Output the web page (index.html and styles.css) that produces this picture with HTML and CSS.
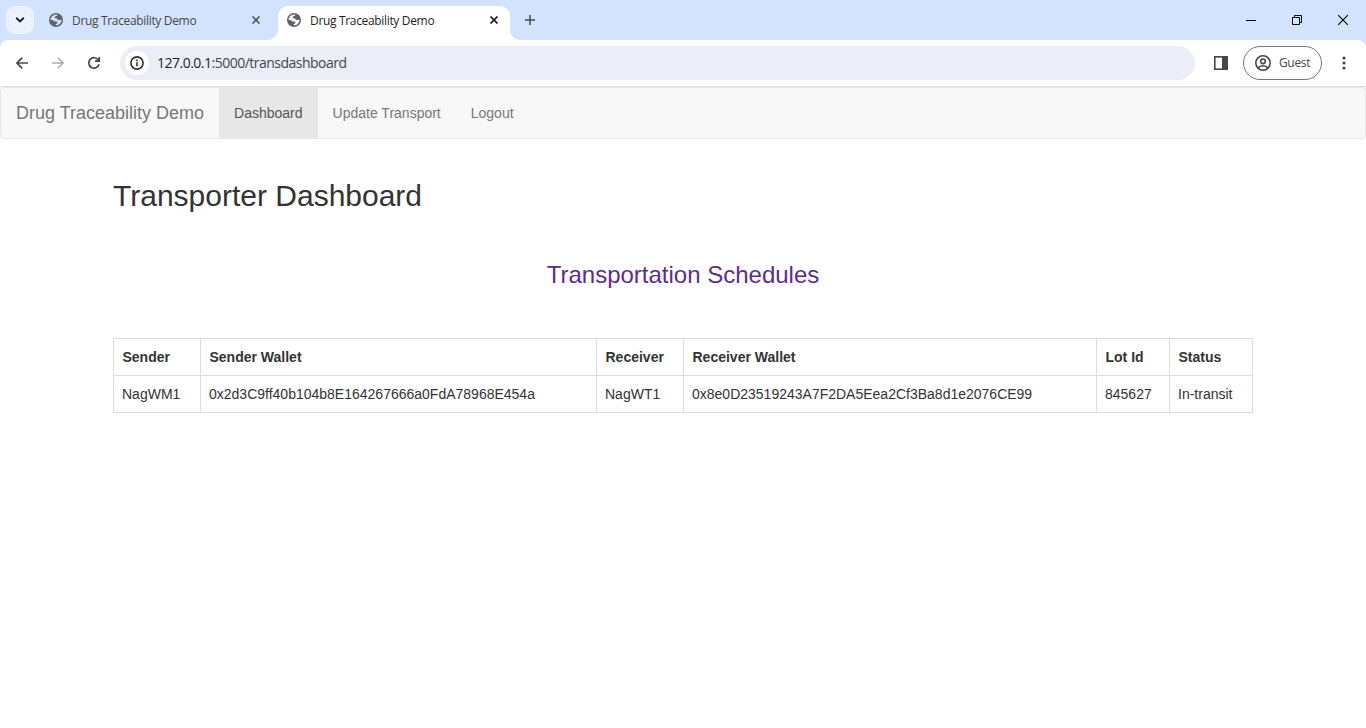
FILE: index.html
```html
<!DOCTYPE html>
<html lang="en">
<head>
<meta charset="utf-8">
<title>Drug Traceability Demo</title>
<link rel="stylesheet" href="styles.css">
</head>
<body>
<svg width="0" height="0" class="defs">
  <symbol id="globe" viewBox="0 0 14 14">
    <circle cx="7" cy="7" r="7" fill="#5f6368"/>
    <path d="M8.600 1.700C8.300 3 6.300 2.800 5.800 3.900c-.3.900.4 1.400 1.300 1.400 1.200 0 1.300 1.600 2.500 1.800 1.100.1 1.800-.6 2.900-.3-.1 3.200-2.400 5.600-5.700 5.700v-1.500c1.300-.1 1.900-.9 1.600-1.700C8 8.300 7 8.500 6 8.400 4.600 8.200 4.700 7 3.500 6.900H1.600C1.700 4 4.200 1.500 7.300 1.500z" fill="currentColor"/>
  </symbol>
</svg>
<div class="window">
  <header class="tabstrip">
    <div class="tabsearch"><svg width="10" height="6" viewBox="0 0 10 6"><path d="M1.200 .8 5 4.500 8.800 .8" fill="none" stroke="#1f1f1f" stroke-width="1.900"/></svg></div>
    <div class="tab">
      <svg class="globe" width="14" height="14"><use href="#globe"/></svg>
      <span class="tabtitle">Drug Traceability Demo</span>
      <svg class="close" width="8" height="8" viewBox="0 0 8 8"><path d="M.5.5l7 7M7.500.5l-7 7" stroke="#474747" stroke-width="1.500"/></svg>
    </div>
    <div class="tab active">
      <svg class="globe" width="14" height="14"><use href="#globe"/></svg>
      <span class="tabtitle">Drug Traceability Demo</span>
      <svg class="close" width="8" height="8" viewBox="0 0 8 8"><path d="M.5.5l7 7M7.500.5l-7 7" stroke="#1f1f1f" stroke-width="1.700"/></svg>
    </div>
    <svg class="newtab" width="10" height="10" viewBox="0 0 10 10"><path d="M5 0v10M0 5h10" stroke="#474747" stroke-width="1.500"/></svg>
    <div class="controls">
      <svg width="10" height="10" viewBox="0 0 10 10"><path d="M0 5.500h10" stroke="#000"/></svg>
      <svg width="10" height="10" viewBox="0 0 10 10"><path d="M.5 2.500h7v7h-7zM2.500 2.500v-2h7v7h-2" fill="none" stroke="#000"/></svg>
      <svg width="10" height="10" viewBox="0 0 10 10"><path d="M0 0l10 10M10 0L0 10" stroke="#000" stroke-width="1.100"/></svg>
    </div>
  </header>
  <div class="toolbar-wrap">
  <div class="toolbar">
    <div class="navicons">
      <svg width="12" height="12" viewBox="0 0 12 12"><path d="M12 6H1.200M6.200.7.900 6l5.300 5.300" fill="none" stroke="#474747" stroke-width="1.700"/></svg>
      <svg width="12" height="12" viewBox="0 0 12 12"><path d="M0 6h10.800M5.800.7 11.100 6l-5.300 5.300" fill="none" stroke="#adadad" stroke-width="1.500"/></svg>
      <svg class="reload" width="14" height="14" viewBox="0 0 14 14"><path d="M12 8.300A5.200 5.200 0 1 1 11.300 4M12.200.9v4.300H8" fill="none" stroke="#474747" stroke-width="1.700"/></svg>
    </div>
    <div class="omnibox">
      <div class="site"><svg width="14" height="14" viewBox="0 0 14 14"><circle cx="7" cy="7" r="6.100" fill="none" stroke="#303030" stroke-width="1.600"/><path d="M7 6.200v4.100M7 3.600v1.600" stroke="#303030" stroke-width="1.600"/></svg></div>
      <span class="url"><b>127.0.0.1</b>:5000/transdashboard</span>
    </div>
    <svg class="panel" width="14" height="14" viewBox="0 0 14 14"><rect x=".8" y=".8" width="12.400" height="12.400" fill="none" stroke="#474747" stroke-width="1.600"/><path d="M8 0h6v14H8z" fill="#474747"/></svg>
    <div class="guest">
      <svg width="16" height="16" viewBox="0 0 16 16" fill="none" stroke="#474747" stroke-width="1.600"><circle cx="8" cy="8" r="7.200"/><circle cx="8" cy="6.300" r="2.300"/><path d="M3 13c2.500-3.100 7.500-3.100 10 0"/></svg>
      <span class="guestname">Guest</span>
    </div>
    <svg class="menu" width="4" height="14" viewBox="0 0 4 14" fill="#474747"><circle cx="2" cy="2" r="1.600"/><circle cx="2" cy="7" r="1.600"/><circle cx="2" cy="12" r="1.600"/></svg>
  </div>
  </div>
  <nav class="navbar">
    <a class="brand">Drug Traceability Demo</a>
    <a class="link current">Dashboard</a>
    <a class="link">Update Transport</a>
    <a class="link">Logout</a>
  </nav>
  <main class="container">
    <h2 class="title">Transporter Dashboard</h2>
    <h3 class="subtitle">Transportation Schedules</h3>
    <table class="table">
      <colgroup><col class="c1"><col class="c2"><col class="c3"><col class="c4"><col class="c5"><col class="c6"></colgroup>
      <tr><th>Sender</th><th>Sender Wallet</th><th>Receiver</th><th>Receiver Wallet</th><th>Lot Id</th><th>Status</th></tr>
      <tr><td>NagWM1</td><td>0x2d3C9ff40b104b8E164267666a0FdA78968E454a</td><td>NagWT1</td><td>0x8e0D23519243A7F2DA5Eea2Cf3Ba8d1e2076CE99</td><td>845627</td><td>In-transit</td></tr>
    </table>
  </main>
</div>
</body>
</html>
```
FILE: styles.css
```css
* { box-sizing: border-box; }
body { margin: 0; background: #fff; font: 14px/20px "Liberation Sans", Arial, sans-serif; color: #333; }
svg { display: block; flex: none; }
.defs { position: absolute; }
.window { height: 728px; overflow: hidden; }
.tabstrip { height: 40px; background: #d3e2fd; display: flex; align-items: center; padding-left: 6px; }
.tabsearch { width: 28px; height: 28px; border-radius: 9px; background: #ebf2fe; display: flex; align-items: center; justify-content: center; }
.tab { display: flex; align-items: center; height: 34px; width: 232px; margin: 6px 0 0 6px; padding: 0 12px 6px 9px; }
.tab.active { background: #fff; border-radius: 10px 10px 0 0; position: relative; }
.tab.active::before, .tab.active::after { content: ""; position: absolute; bottom: 0; width: 10px; height: 10px; }
.tab.active::before { left: -10px; background: radial-gradient(circle at 0 0, transparent 9.500px, #fff 10px); }
.tab.active::after { right: -10px; background: radial-gradient(circle at 100% 0, transparent 9.500px, #fff 10px); }
.globe { color: #d3e2fd; }
.active .globe { color: #fff; }
.tabtitle { font: 12px/16px "Open Sans", sans-serif; letter-spacing: -0.330px; color: #474747; margin-left: 9px; padding-top: 2px; flex: 1; white-space: nowrap; }
.tab.active .tabtitle { color: #1f1f1f; }
.newtab { margin-left: 15px; }
.controls { margin-left: auto; display: flex; gap: 36px; padding-right: 18px; }
.toolbar-wrap { background: #d3e2fd; }
.toolbar { height: 47px; display: flex; align-items: center; border-bottom: 1px solid #e0e0e0; background: #fff; border-radius: 8px 8px 0 0; }
.navicons { display: flex; align-items: center; gap: 24px; padding-left: 16px; width: 120px; }
.reload { margin-left: -1px; }
.omnibox { width: 1075px; height: 34px; border-radius: 17px; background: #ebeef7; display: flex; align-items: center; padding-left: 5px; }
.site { width: 24px; height: 24px; border-radius: 50%; background: #fff; display: flex; align-items: center; justify-content: center; }
.url { font: 14px/20px "Open Sans", sans-serif; letter-spacing: -0.510px; color: #474747; margin-left: 8px; }
.url b { font-weight: 400; color: #1f1f1f; }
.panel { margin-left: 19px; }
.guest { margin-left: 15px; width: 79px; height: 34px; border: 1px solid #747775; border-radius: 17px; display: flex; align-items: center; padding-left: 11px; }
.guestname { font: 12px/16px "Open Sans", sans-serif; letter-spacing: -0.350px; color: #474747; margin-left: 8px; }
.menu { margin-left: 20px; }
.navbar { height: 52px; background: #f8f8f8; border: 1px solid #e7e7e7; border-radius: 4px; display: flex; color: #777; }
.brand { font-size: 18px; line-height: 20px; padding: 15px; }
.link { padding: 15px; }
.current { background: #e7e7e7; color: #555; }
.container { width: 1140px; margin: 0 auto; }
.title { font-size: 30px; line-height: 33px; font-weight: 500; margin: 40px 0 0; }
.subtitle { font-size: 24px; line-height: 26px; font-weight: 500; color: #5c2d91; text-align: center; margin: 50px 0 50px; }
.table { width: 1140px; border-collapse: collapse; table-layout: fixed; }
.table th, .table td { border: 1px solid #ddd; padding: 8px; text-align: left; line-height: 20px; }
.table th { padding-left: 8.500px; }
.c1 { width: 87px; }
.c2 { width: 396px; }
.c3 { width: 87px; }
.c4 { width: 413px; }
.c5 { width: 73px; }
.c6 { width: 83px; }
```
